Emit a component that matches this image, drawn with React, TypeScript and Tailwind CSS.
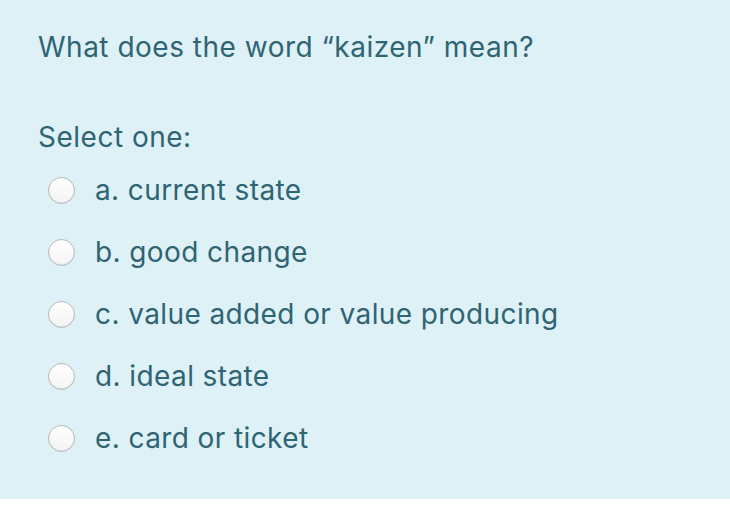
import React from "react";

const options = [
  "a. current state",
  "b. good change",
  "c. value added or value producing",
  "d. ideal state",
  "e. card or ticket",
];

function Radio() {
  return (
    <span className="block w-[27px] h-[27px] rounded-full border border-[#b4b8ba] bg-gradient-to-b from-white to-[#f4f4f4] shadow-[inset_0_-1px_1px_rgba(0,0,0,0.08)] shrink-0" />
  );
}

export default function App() {
  return (
    <div className="w-[730px] h-[506px] bg-white" style={{ fontFamily: "Inter, 'Noto Sans', sans-serif" }}>
      <div className="h-[499px] bg-[#def1f7] pl-[38px] pt-[29px] text-[#2f6473]">
        <div className="text-[28px] leading-[36px] tracking-[0.5px]">What does the word “kaizen” mean?</div>
        <div className="mt-[54px] text-[28px] leading-[36px] tracking-[0.5px]">Select one:</div>
        <div className="mt-[4px] flex flex-col">
          {options.map((o) => (
            <div key={o} className="h-[62px] flex items-center pl-[10px]">
              <Radio />
              <span className="ml-[20px] text-[28px] leading-[36px] tracking-[0.4px]">{o}</span>
            </div>
          ))}
        </div>
      </div>
    </div>
  );
}
